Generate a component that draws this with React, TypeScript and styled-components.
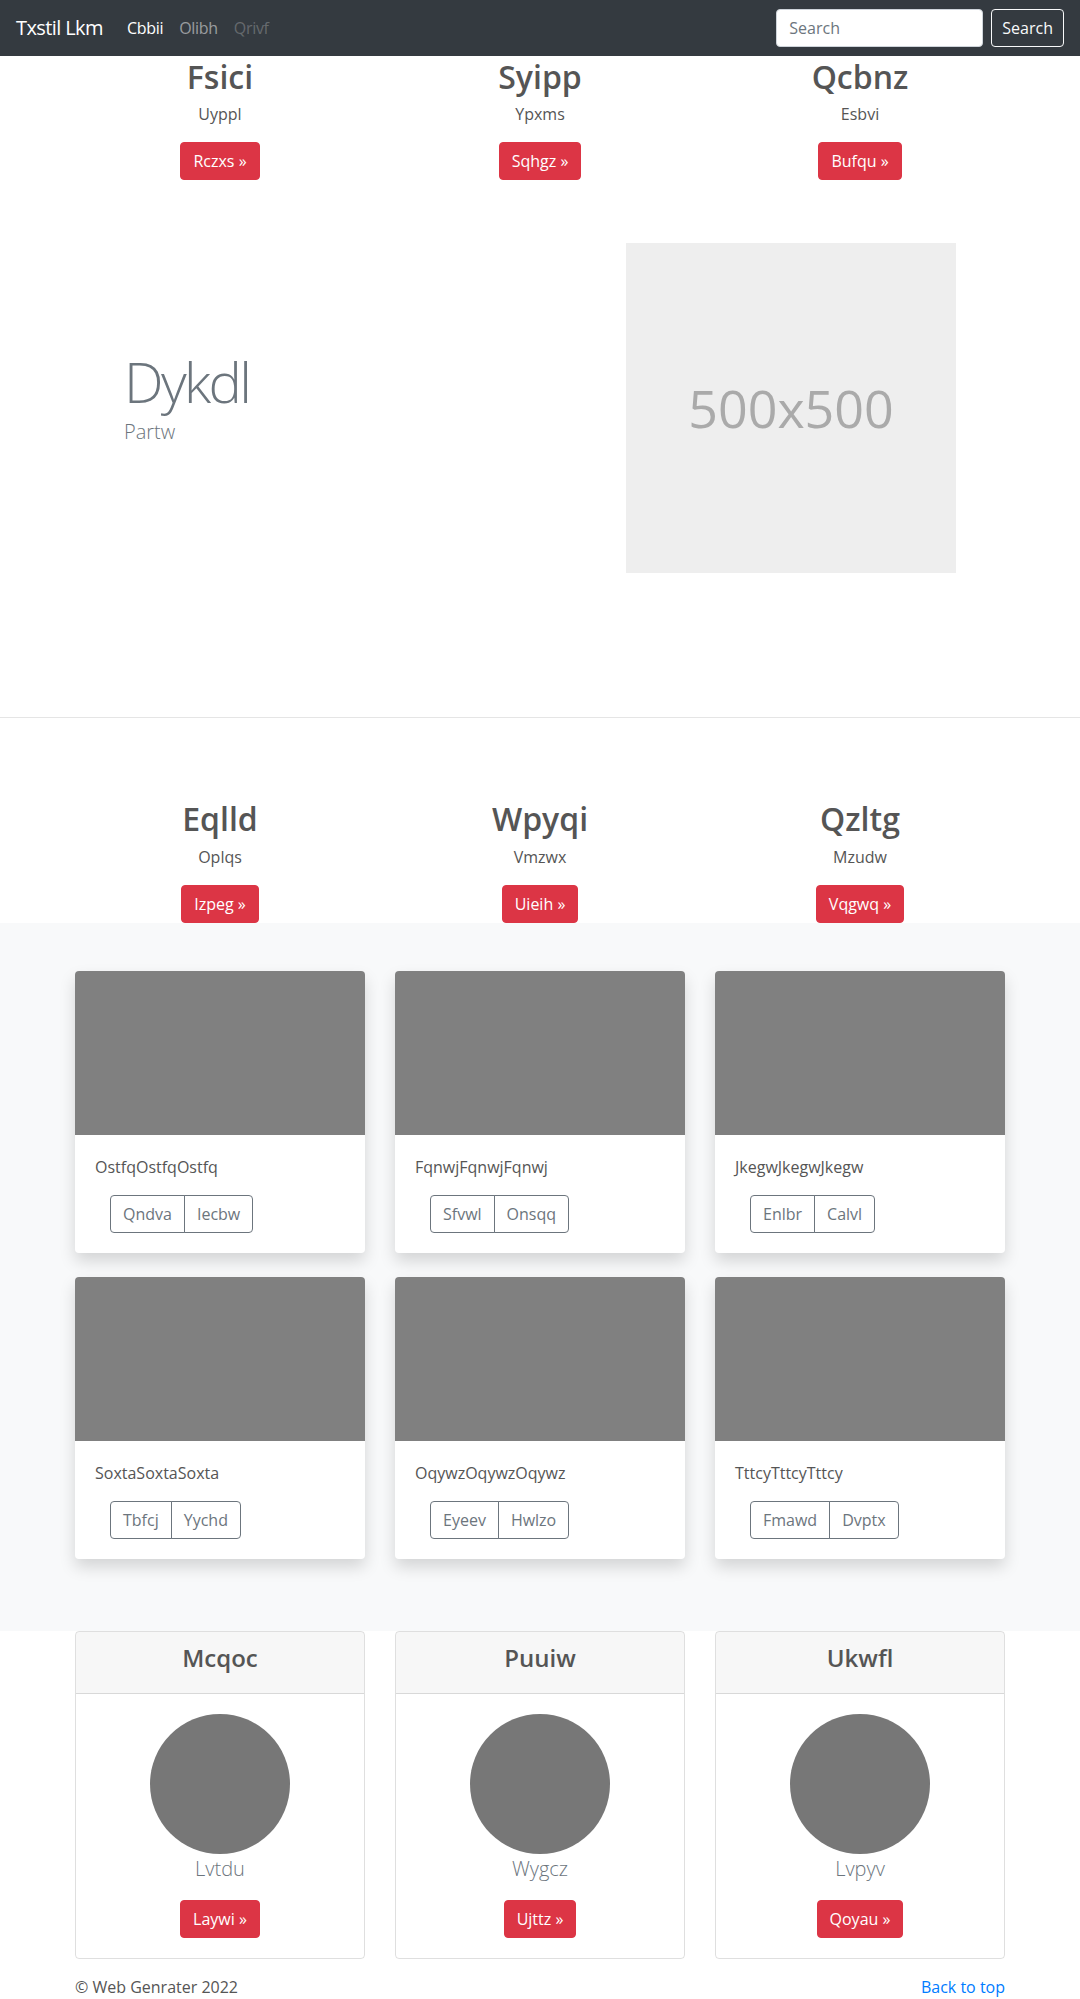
import React from "react";
import styled, { createGlobalStyle } from "styled-components";

const FONT = `"Open Sans", "Noto Sans", "Liberation Sans", sans-serif`;

const GlobalStyle = createGlobalStyle`
  body {
    margin: 0;
    font-family: ${FONT};
    font-size: 16px;
    line-height: 1.5;
    color: #555;
    background: #fff;
  }
  * { box-sizing: border-box; }
`;

// ---------- navbar ----------
const NavBar = styled.nav`
  height: 56px;
  padding: 8px 16px;
  background: #343a40;
  display: flex;
  align-items: center;
`;

const Brand = styled.a`
  font-size: 20px;
  line-height: 30px;
  letter-spacing: -0.6px;
  color: #fff;
  margin-right: 16px;
  text-decoration: none;
`;

const NavLinks = styled.div`
  display: flex;
  flex: 1;
`;

const tones = {
  active: "#fff",
  normal: "rgba(255,255,255,.5)",
  disabled: "rgba(255,255,255,.25)",
};

const NavLink = styled.a<{ $tone: keyof typeof tones }>`
  padding: 8px;
  letter-spacing: -0.3px;
  color: ${(p) => tones[p.$tone]};
  text-decoration: none;
`;

const SearchForm = styled.form`
  display: flex;
  gap: 8px;
`;

const SearchInput = styled.input`
  width: 207px;
  height: 38px;
  padding: 6px 12px;
  border: 1px solid #ced4da;
  border-radius: 4px;
  font-family: ${FONT};
  font-size: 16px;
  color: #495057;
  &::placeholder {
    color: #6c757d;
  }
`;

const SearchButton = styled.button`
  height: 38px;
  padding: 6px 10px;
  border: 1px solid #f8f9fa;
  border-radius: 4px;
  background: transparent;
  color: #f8f9fa;
  font-family: ${FONT};
  font-size: 16px;
`;

// ---------- shared ----------
const Container = styled.div`
  width: 930px;
  margin: 0 auto;
`;

const RedButton = styled.a`
  display: inline-block;
  padding: 6px 12px;
  border: 1px solid #dc3545;
  border-radius: 4px;
  background: #dc3545;
  color: #fff;
  line-height: 1.5;
  text-decoration: none;
`;

// ---------- marketing columns ----------
const Marketing = styled.div`
  display: grid;
  grid-template-columns: repeat(3, 1fr);
  column-gap: 30px;
  text-align: center;
`;

const ColTitle = styled.h2`
  font-size: 32px;
  font-weight: 600;
  line-height: 1.2;
  padding-top: 2px;
  margin: 0 0 6px;
  color: #555;
`;

const ColText = styled.p`
  margin: 0 0 16px;
`;

const ActionLine = styled.p<{ $flush?: boolean }>`
  margin: 0 0 ${(p) => (p.$flush ? 0 : 16)}px;
`;

// ---------- featurette ----------
const Featurette = styled.div`
  display: grid;
  grid-template-columns: 1fr 330px;
  align-items: center;
  padding: 47px 49px 64px;
`;

const FeatHeading = styled.h2`
  font-size: 56px;
  font-weight: 300;
  line-height: 1;
  letter-spacing: -2.6px;
  margin: 0 0 8px;
  color: #6c757d;
`;

const Lead = styled.p`
  font-size: 20px;
  font-weight: 300;
  margin: 0 0 16px;
  color: #6c757d;
`;

const Placeholder = styled.div`
  width: 330px;
  height: 330px;
  background: #eee;
  color: #aaa;
  font-size: 52px;
  display: flex;
  align-items: center;
  justify-content: center;
`;

const Divider = styled.hr`
  margin: 80px 0;
  border: 0;
  border-top: 1px solid rgba(0, 0, 0, 0.1);
`;

// ---------- album ----------
const Album = styled.section`
  background: #f8f9fa;
  padding: 48px 0 72px;
`;

const CardGrid = styled.div`
  display: grid;
  grid-template-columns: repeat(3, 1fr);
  gap: 24px 30px;
`;

const Card = styled.div`
  background: #fff;
  border-radius: 4px;
  overflow: hidden;
  box-shadow: 0 8px 16px rgba(0, 0, 0, 0.15);
`;

const Thumb = styled.div`
  height: 164px;
  background: #808080;
`;

const CardBody = styled.div`
  padding: 20px;
`;

const CardText = styled.p`
  margin: 0 0 16px;
`;

const BtnGroup = styled.div`
  display: inline-flex;
  margin-left: 15px;
`;

const GroupButton = styled.button`
  padding: 6px 12px;
  border: 1px solid #6c757d;
  background: transparent;
  color: #6c757d;
  font-family: ${FONT};
  font-size: 16px;
  line-height: 1.5;
  &:first-child {
    border-radius: 4px 0 0 4px;
  }
  &:last-child {
    margin-left: -1px;
    border-radius: 0 4px 4px 0;
  }
`;

// ---------- team cards ----------
const TeamGrid = styled.div`
  display: grid;
  grid-template-columns: repeat(3, 1fr);
  column-gap: 30px;
  text-align: center;
`;

const TeamCard = styled.div`
  border: 1px solid rgba(0, 0, 0, 0.125);
  border-radius: 4px;
  overflow: hidden;
`;

const TeamHeader = styled.div`
  padding: 12px 20px;
  background: rgba(0, 0, 0, 0.03);
  border-bottom: 1px solid rgba(0, 0, 0, 0.125);
`;

const TeamTitle = styled.h4`
  font-size: 24px;
  font-weight: 600;
  line-height: 1.2;
  margin: 0 0 8px;
  color: #555;
`;

const TeamBody = styled.div`
  padding: 20px;
`;

const Avatar = styled.div`
  width: 140px;
  height: 140px;
  border-radius: 50%;
  background: #777;
  margin: 0 auto;
`;

const TeamName = styled.p`
  font-size: 20px;
  font-weight: 300;
  margin: 0 0 16px;
  color: #6c757d;
`;

// ---------- footer ----------
const Footer = styled.footer`
  display: flex;
  justify-content: space-between;
  padding: 16px 0;
`;

const FooterText = styled.p`
  margin: 0;
`;

const TopLink = styled.a`
  color: #007bff;
  text-decoration: none;
`;

const rowOne = [
  ["Fsici", "Uyppl", "Rczxs"],
  ["Syipp", "Ypxms", "Sqhgz"],
  ["Qcbnz", "Esbvi", "Bufqu"],
];

const rowTwo = [
  ["Eqlld", "Oplqs", "Izpeg"],
  ["Wpyqi", "Vmzwx", "Uieih"],
  ["Qzltg", "Mzudw", "Vqgwq"],
];

const albumCards = [
  ["Ostfq", "Qndva", "Iecbw"],
  ["Fqnwj", "Sfvwl", "Onsqq"],
  ["Jkegw", "Enlbr", "Calvl"],
  ["Soxta", "Tbfcj", "Yychd"],
  ["Oqywz", "Eyeev", "Hwlzo"],
  ["Tttcy", "Fmawd", "Dvptx"],
];

const team = [
  ["Mcqoc", "Lvtdu", "Laywi"],
  ["Puuiw", "Wygcz", "Ujttz"],
  ["Ukwfl", "Lvpyv", "Qoyau"],
];

const MarketingRow = ({ items, flush }: { items: string[][]; flush?: boolean }) => (
  <Marketing>
    {items.map(([title, text, action]) => (
      <div key={title}>
        <ColTitle>{title}</ColTitle>
        <ColText>{text}</ColText>
        <ActionLine $flush={flush}>
          <RedButton href="#">{action} »</RedButton>
        </ActionLine>
      </div>
    ))}
  </Marketing>
);

export default function App() {
  return (
    <>
      <GlobalStyle />
      <NavBar>
        <Brand href="#">Txstil Lkm</Brand>
        <NavLinks>
          <NavLink $tone="active" href="#">Cbbii</NavLink>
          <NavLink $tone="normal" href="#">Olibh</NavLink>
          <NavLink $tone="disabled" href="#">Qrivf</NavLink>
        </NavLinks>
        <SearchForm onSubmit={(e) => e.preventDefault()}>
          <SearchInput placeholder="Search" />
          <SearchButton type="submit">Search</SearchButton>
        </SearchForm>
      </NavBar>

      <Container>
        <MarketingRow items={rowOne} />
        <Featurette>
          <div>
            <FeatHeading>Dykdl</FeatHeading>
            <Lead>Partw</Lead>
          </div>
          <Placeholder>500x500</Placeholder>
        </Featurette>
      </Container>

      <Divider />

      <Container>
        <MarketingRow items={rowTwo} flush />
      </Container>

      <Album>
        <Container>
          <CardGrid>
            {albumCards.map(([word, a, b]) => (
              <Card key={word}>
                <Thumb />
                <CardBody>
                  <CardText>{word + word + word}</CardText>
                  <BtnGroup>
                    <GroupButton>{a}</GroupButton>
                    <GroupButton>{b}</GroupButton>
                  </BtnGroup>
                </CardBody>
              </Card>
            ))}
          </CardGrid>
        </Container>
      </Album>

      <Container>
        <TeamGrid>
          {team.map(([title, name, action]) => (
            <TeamCard key={title}>
              <TeamHeader>
                <TeamTitle>{title}</TeamTitle>
              </TeamHeader>
              <TeamBody>
                <Avatar />
                <TeamName>{name}</TeamName>
                <RedButton href="#">{action} »</RedButton>
              </TeamBody>
            </TeamCard>
          ))}
        </TeamGrid>
        <Footer>
          <FooterText>© Web Genrater 2022</FooterText>
          <TopLink href="#">Back to top</TopLink>
        </Footer>
      </Container>
    </>
  );
}
